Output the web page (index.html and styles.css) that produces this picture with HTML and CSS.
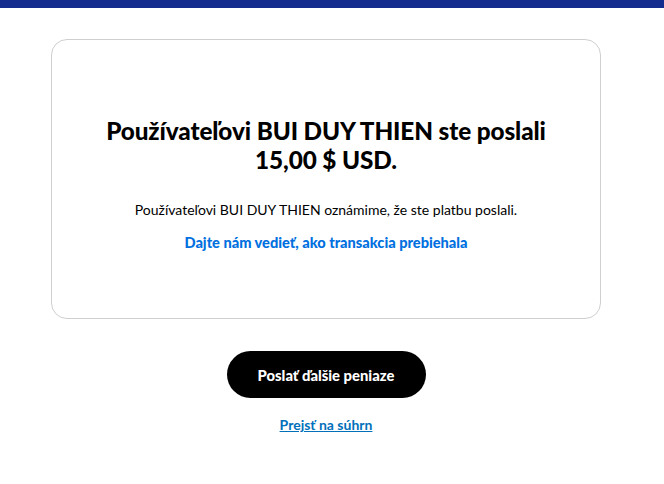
FILE: index.html
```html
<!DOCTYPE html>
<html lang="sk">
<head>
<meta charset="utf-8">
<title>PayPal</title>
<link rel="stylesheet" href="styles.css">
</head>
<body>
<div class="topbar"></div>
<main class="page">
  <section class="card">
    <h1 class="title">Používateľovi BUI DUY THIEN ste poslali<br>15,00 $ USD.</h1>
    <p class="note">Používateľovi BUI DUY THIEN oznámime, že ste platbu poslali.</p>
    <a class="feedback" href="#">Dajte nám vedieť, ako transakcia prebiehala</a>
  </section>
  <div class="actions">
    <button class="primary" type="button">Poslať ďalšie peniaze</button>
    <a class="summary" href="#">Prejsť na súhrn</a>
  </div>
</main>
</body>
</html>
```
FILE: styles.css
```css
* { box-sizing: border-box; }
html, body { margin: 0; padding: 0; background: #fff; }
body { font-family: Lato, "Noto Sans", sans-serif; color: #000; }
.topbar { height: 8px; background: #142c8e; }
.page { width: 550px; margin: 31px 0 0 51px; }
.card {
  height: 280px;
  border: 1px solid #cfcfcf;
  border-radius: 16px;
  display: flex;
  flex-direction: column;
  align-items: center;
  padding-top: 76px;
}
.title {
  margin: 0;
  font-size: 24.3px;
  line-height: 29px;
  font-weight: 900;
  text-align: center;
  letter-spacing: -0.1px;
}
.note {
  margin: 27px 0 0;
  font-size: 14px;
  line-height: 18px;
}
.feedback {
  margin-top: 15px;
  font-size: 14.6px;
  line-height: 18px;
  font-weight: 900;
  color: #0070e0;
  text-decoration: none;
}
.actions {
  display: flex;
  flex-direction: column;
  align-items: center;
  padding-top: 32px;
}
.primary {
  width: 199px;
  height: 47px;
  border: 0;
  border-radius: 24px;
  background: #000;
  color: #fff;
  font-family: inherit;
  font-size: 14.8px;
  font-weight: 900;
}
.summary {
  margin-top: 18px;
  font-size: 14px;
  line-height: 18px;
  font-weight: 700;
  color: #0070ba;
  text-decoration: underline;
}
```
